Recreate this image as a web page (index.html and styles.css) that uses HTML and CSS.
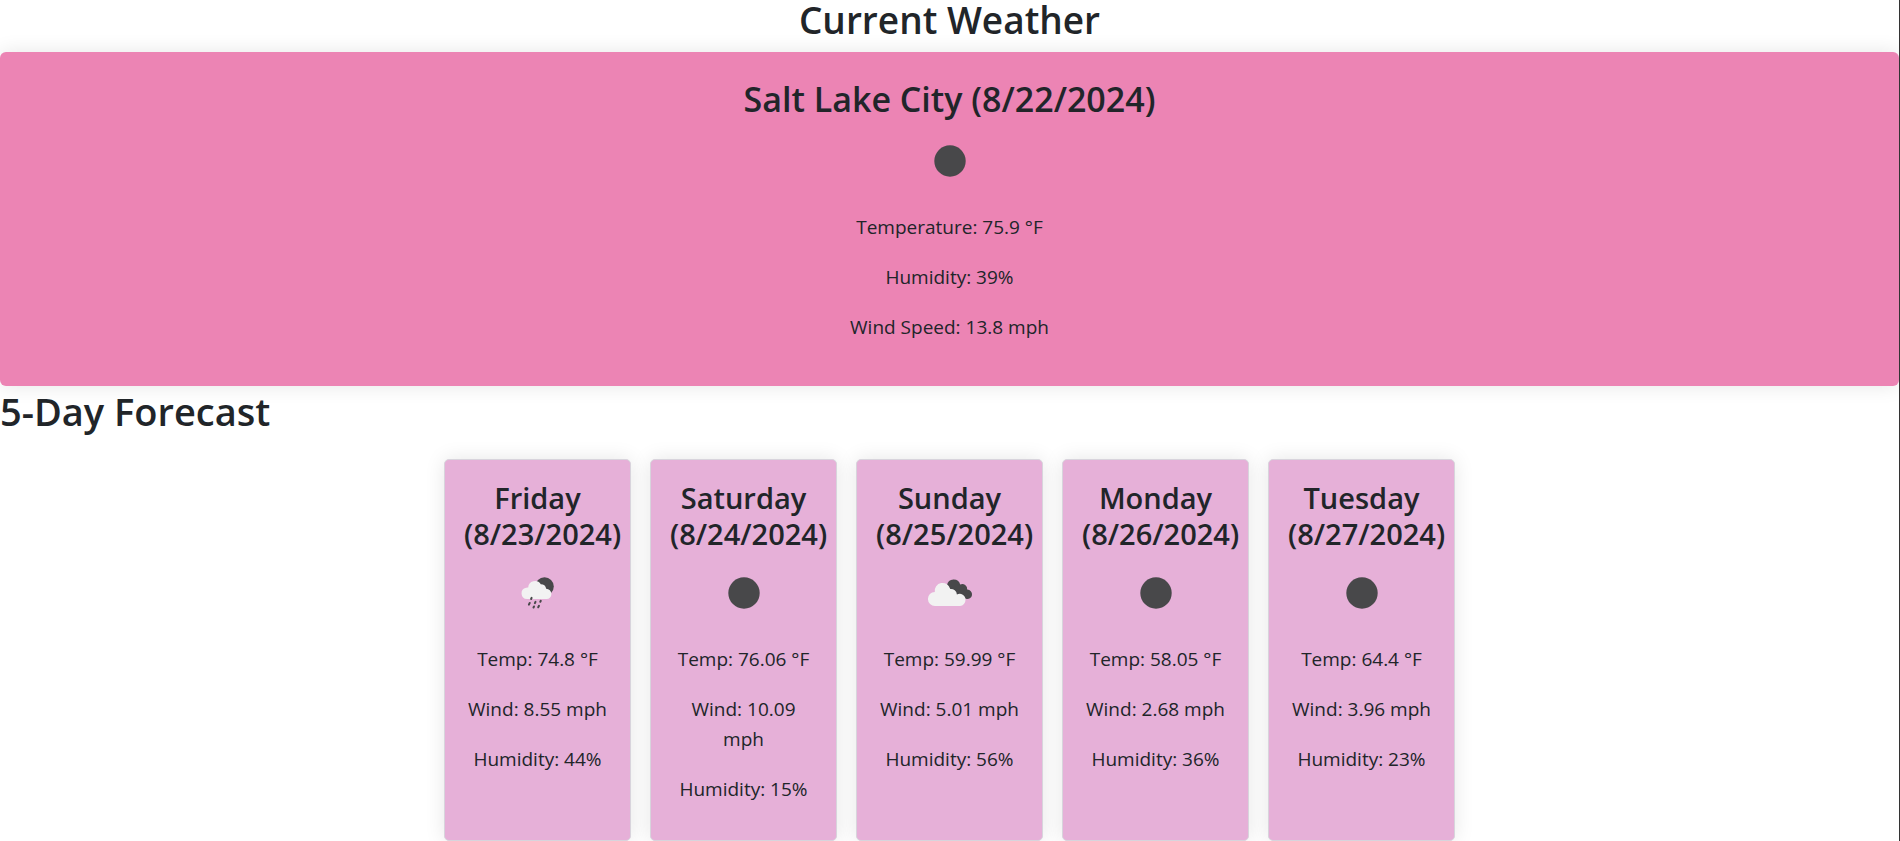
FILE: index.html
```html
<!DOCTYPE html>
<html lang="en">
<head>
<meta charset="utf-8">
<meta name="viewport" content="width=device-width, initial-scale=1">
<title>Weather Dashboard</title>
<link rel="stylesheet" href="styles.css">
</head>
<body>
<svg class="symbols" aria-hidden="true">
  <symbol id="clear" viewBox="0 0 64 64"><circle cx="32" cy="32" r="15.7"/></symbol>
  <symbol id="rain" viewBox="0 0 64 64">
    <circle cx="38.500" cy="25.500" r="9.300"/>
    <path class="cloud" d="M21 38a5.700 5.700 0 0 1-.8-11.300 4.300 4.300 0 0 1 2-.2 6.800 6.800 0 0 1 12.600-3.200 5.500 5.500 0 0 1 5.400 4.400 5.300 5.300 0 0 1 5.200 5.200 5 5 0 0 1-4.800 5.100z"/>
    <path class="drops" d="M25.600 36.800l-.5 1.200M23.700 42l-.8 1.600M29.500 40.800l-.6 1.300M28 45.500l-.5 1M34.800 39.800l-.5 1M33 44.800l-.8 1.500"/>
  </symbol>
  <symbol id="clouds" viewBox="0 0 64 64">
    <path d="M29 24a6.800 6.800 0 0 1 13.200-.6 5 5 0 0 1 7 5.200 4.700 4.700 0 1 1-1.200 9.200L36 34z"/>
    <path class="cloud" d="M17 45a7 7 0 0 1-.2-14 7.900 7.900 0 0 1 15.500-3 6 6 0 0 1 6.600 5.500 5.800 5.800 0 0 1 8.600 5.300A6 6 0 0 1 42 45z"/>
  </symbol>
</svg>
<main>
  <h1 class="page-title">Current Weather</h1>
  <section class="current">
    <h2 class="city">Salt Lake City (8/22/2024)</h2>
    <svg class="icon" role="img" aria-label="Clear night"><use href="#clear"/></svg>
    <p>Temperature: 75.9 °F</p>
    <p>Humidity: 39%</p>
    <p>Wind Speed: 13.8 mph</p>
  </section>
  <h2 class="forecast-title">5-Day Forecast</h2>
  <div class="forecast">
    <article class="day">
      <h3>Friday (8/23/2024)</h3>
      <svg class="icon" role="img" aria-label="Rain"><use href="#rain"/></svg>
      <p>Temp: 74.8 °F</p>
      <p>Wind: 8.55 mph</p>
      <p>Humidity: 44%</p>
    </article>
    <article class="day">
      <h3>Saturday (8/24/2024)</h3>
      <svg class="icon" role="img" aria-label="Clear night"><use href="#clear"/></svg>
      <p>Temp: 76.06 °F</p>
      <p>Wind: 10.09 mph</p>
      <p>Humidity: 15%</p>
    </article>
    <article class="day">
      <h3>Sunday (8/25/2024)</h3>
      <svg class="icon" role="img" aria-label="Broken clouds"><use href="#clouds"/></svg>
      <p>Temp: 59.99 °F</p>
      <p>Wind: 5.01 mph</p>
      <p>Humidity: 56%</p>
    </article>
    <article class="day">
      <h3>Monday (8/26/2024)</h3>
      <svg class="icon" role="img" aria-label="Clear night"><use href="#clear"/></svg>
      <p>Temp: 58.05 °F</p>
      <p>Wind: 2.68 mph</p>
      <p>Humidity: 36%</p>
    </article>
    <article class="day">
      <h3>Tuesday (8/27/2024)</h3>
      <svg class="icon" role="img" aria-label="Clear night"><use href="#clear"/></svg>
      <p>Temp: 64.4 °F</p>
      <p>Wind: 3.96 mph</p>
      <p>Humidity: 23%</p>
    </article>
  </div>
</main>
</body>
</html>
```
FILE: styles.css
```css
*, *::before, *::after {
  box-sizing: border-box;
}

body {
  margin: 0;
  border-right: 1px solid #333;
  background: #fff;
  color: #212529;
  font-family: "Segoe UI", "Open Sans", "Noto Sans", sans-serif;
  font-size: 19px;
  line-height: 30px;
}

h1, h2, h3 {
  margin: 0 0 9px;
  font-weight: 600;
}

p {
  margin: 0 0 20px;
}

.symbols {
  display: none;
}

.page-title {
  margin-bottom: 12px;
  font-size: 37px;
  line-height: 40px;
  text-align: center;
}

.current {
  padding: 26px 25px 0;
  border-radius: 6px;
  background: #ec84b4;
  box-shadow: 0 0 20px rgba(0, 0, 0, 0.1);
  text-align: center;
}

.current p:last-child {
  margin: 0;
  padding-bottom: 44px;
}

.city {
  font-size: 34px;
  line-height: 42px;
}

.icon {
  display: block;
  width: 64px;
  height: 64px;
  margin: 0 auto 19px;
  fill: #48484a;
}

.cloud {
  fill: #f2f2f2;
}

.drops {
  fill: none;
  stroke: #48484a;
  stroke-width: 2;
  stroke-linecap: round;
}

.forecast-title {
  margin-bottom: 13px;
  font-size: 38px;
  line-height: 50px;
}

.forecast {
  display: flex;
  justify-content: center;
  gap: 19px;
}

.day {
  flex: 0 1 187px;
  min-width: 0;
  margin-top: 10px;
  padding: 20px 19px 0;
  border: 1px solid #d8d4dc;
  border-radius: 5px;
  background: #e6b0d8;
  box-shadow: 0 0 20px rgba(0, 0, 0, 0.1);
  text-align: center;
}

.day h3 {
  font-size: 29px;
  line-height: 36px;
}

.day p:last-child {
  margin-bottom: 36px;
}
```
